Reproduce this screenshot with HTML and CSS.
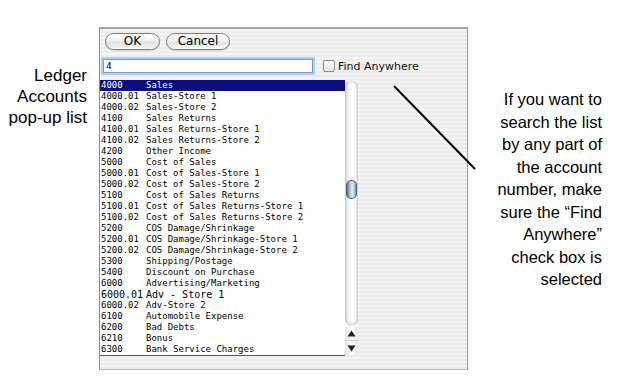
FILE: index.html
```html
<!DOCTYPE html>
<html>
<head>
<meta charset="utf-8">
<link rel="stylesheet" href="styles.css">
</head>
<body>
<div class="page">
  <div class="note note-left">Ledger<br>Accounts<br>pop-up list</div>
  <div class="dialog">
    <div class="buttons">
      <div class="btn btn-ok">OK</div>
      <div class="btn btn-cancel">Cancel</div>
    </div>
    <div class="search-row">
      <div class="field">4</div>
      <div class="check"></div>
      <div class="check-label">Find Anywhere</div>
    </div>
    <div class="list">
      <div class="rows">
        <div class="row selected"><span class="num">4000</span><span>Sales</span></div>
        <div class="row"><span class="num">4000.01</span><span>Sales-Store 1</span></div>
        <div class="row"><span class="num">4000.02</span><span>Sales-Store 2</span></div>
        <div class="row"><span class="num">4100</span><span>Sales Returns</span></div>
        <div class="row"><span class="num">4100.01</span><span>Sales Returns-Store 1</span></div>
        <div class="row"><span class="num">4100.02</span><span>Sales Returns-Store 2</span></div>
        <div class="row"><span class="num">4200</span><span>Other Income</span></div>
        <div class="row"><span class="num">5000</span><span>Cost of Sales</span></div>
        <div class="row"><span class="num">5000.01</span><span>Cost of Sales-Store 1</span></div>
        <div class="row"><span class="num">5000.02</span><span>Cost of Sales-Store 2</span></div>
        <div class="row"><span class="num">5100</span><span>Cost of Sales Returns</span></div>
        <div class="row"><span class="num">5100.01</span><span>Cost of Sales Returns-Store 1</span></div>
        <div class="row"><span class="num">5100.02</span><span>Cost of Sales Returns-Store 2</span></div>
        <div class="row"><span class="num">5200</span><span>COS Damage/Shrinkage</span></div>
        <div class="row"><span class="num">5200.01</span><span>COS Damage/Shrinkage-Store 1</span></div>
        <div class="row"><span class="num">5200.02</span><span>COS Damage/Shrinkage-Store 2</span></div>
        <div class="row"><span class="num">5300</span><span>Shipping/Postage</span></div>
        <div class="row"><span class="num">5400</span><span>Discount on Purchase</span></div>
        <div class="row"><span class="num">6000</span><span>Advertising/Marketing</span></div>
        <div class="row big"><span class="num">6000.01</span><span>Adv - Store 1</span></div>
        <div class="row"><span class="num">6000.02</span><span>Adv-Store 2</span></div>
        <div class="row"><span class="num">6100</span><span>Automobile Expense</span></div>
        <div class="row"><span class="num">6200</span><span>Bad Debts</span></div>
        <div class="row"><span class="num">6210</span><span>Bonus</span></div>
        <div class="row"><span class="num">6300</span><span>Bank Service Charges</span></div>
      </div>
      <div class="scrollbar">
        <div class="track"><div class="thumb"></div></div>
        <div class="arrow arrow-up"><svg width="9" height="7" viewBox="0 0 9 7"><polygon points="4.5,0.5 8.5,6.5 0.5,6.5" fill="#222"/></svg></div>
        <div class="arrow arrow-down"><svg width="9" height="7" viewBox="0 0 9 7"><polygon points="0.5,0.5 8.5,0.5 4.5,6.5" fill="#222"/></svg></div>
      </div>
    </div>
  </div>
  <div class="note note-right">If you want to<br>search the list<br>by any part of<br>the account<br>number, make<br>sure the “Find<br>Anywhere”<br>check box is<br>selected</div>
  <svg class="pointer" width="628" height="379" viewBox="0 0 628 379"><line x1="394" y1="86" x2="475" y2="169" stroke="#000" stroke-width="2"/></svg>
</div>
</body>
</html>
```

FILE: styles.css
```css
html, body {
  margin: 0;
  padding: 0;
  background: #fff;
}
.page {
  position: relative;
  width: 628px;
  height: 379px;
  display: flex;
  align-items: flex-start;
  padding-top: 27px;
  box-sizing: border-box;
  font-family: "Liberation Sans", Arial, sans-serif;
  color: #000;
}
.note {
  text-align: right;
}
.note-left {
  width: 87px;
  font-size: 17px;
  line-height: 21px;
  padding-top: 38px;
}
.note-right {
  width: 134px;
  font-size: 16.5px;
  line-height: 22.5px;
  padding-top: 61px;
}
.dialog {
  margin-left: 12px;
  width: 367px;
  height: 340px;
  border-top: 2px solid #a2a2a2;
  border-left: 1px solid #8c8c8c;
  border-right: 1px solid #9a9a9a;
  border-bottom: 1px solid #b5b5b5;
  background: repeating-linear-gradient(to bottom, #f4f4f4 0, #f4f4f4 2px, #ececec 2px, #ececec 4px);
  display: flex;
  flex-direction: column;
}
.buttons {
  display: flex;
  gap: 6px;
  margin-top: 4px;
  padding-left: 5px;
}
.btn {
  height: 15px;
  border: 1px solid #7c7c7c;
  border-radius: 9px;
  background: linear-gradient(to bottom, #ffffff 0%, #f3f3f3 45%, #e2e2e2 55%, #f8f8f8 100%);
  box-shadow: 0 1px 1px rgba(0,0,0,0.15);
  font-family: "DejaVu Sans", sans-serif;
  font-size: 12px;
  line-height: 15px;
  text-align: center;
  color: #000;
}
.btn-ok { width: 53px; }
.btn-cancel { width: 62px; }
.search-row {
  display: flex;
  align-items: center;
  margin-top: 7px;
  padding-left: 1px;
  height: 18px;
}
.field {
  width: 206px;
  height: 12px;
  border: 1px solid #7d98c2;
  box-shadow: 0 0 0 2px #b4cdec;
  margin-left: 2px;
  background: #fff;
  font-family: "DejaVu Sans Mono", monospace;
  font-size: 9.5px;
  line-height: 12px;
  padding-left: 2px;
}
.check {
  width: 10px;
  height: 10px;
  margin-left: 10px;
  border: 1px solid #8b8b8b;
  border-radius: 2px;
  background: linear-gradient(to bottom, #fff, #e4e4e4);
}
.check-label {
  margin-left: 3px;
  font-family: "DejaVu Sans", sans-serif;
  font-size: 11px;
  color: #111;
}
.list {
  display: flex;
  margin-top: 5px;
  width: 258px;
}
.rows {
  width: 245px;
  height: 275px;
  background: #fff;
  border-bottom: 1px solid #555;
  overflow: hidden;
}
.row {
  height: 11px;
  line-height: 11px;
  font-family: "DejaVu Sans Mono", monospace;
  font-size: 9px;
  white-space: pre;
  padding-left: 1px;
  color: #000;
}
.row.big { font-size: 10px; }
.row.selected {
  background: #0c0c7c;
  color: #fff;
}
.num {
  display: inline-block;
  width: 45px;
}
.scrollbar {
  width: 13px;
  height: 275px;
  display: flex;
  flex-direction: column;
  background: #fafafa;
}
.track {
  height: 246px;
  border-radius: 7px;
  background: linear-gradient(to right, #d2d2d2 0%, #f2f2f2 25%, #ffffff 55%, #f6f6f6 80%, #dadada 100%);
  box-shadow: inset 0 2px 2px rgba(0,0,0,0.1), inset 0 -3px 3px rgba(0,0,0,0.1);
  display: flex;
  flex-direction: column;
  align-items: center;
}
.thumb {
  margin-top: 100px;
  width: 9px;
  height: 17px;
  border: 1px solid #4d5d74;
  border-radius: 5px;
  background: linear-gradient(to right, #5c6f89 0%, #b9c7d8 35%, #e6edf5 60%, #8598b2 100%);
}
.arrow {
  height: 14px;
  display: flex;
  align-items: center;
  justify-content: center;
  background: linear-gradient(to right, #e6e6e6, #fcfcfc 50%, #e8e8e8);
}
.arrow-up {
  margin-top: 1px;
  border-bottom: 1px solid #cfcfcf;
  height: 13px;
}
.arrow svg { display: block; }
.pointer {
  position: absolute;
  left: 0;
  top: 0;
  pointer-events: none;
}
```
